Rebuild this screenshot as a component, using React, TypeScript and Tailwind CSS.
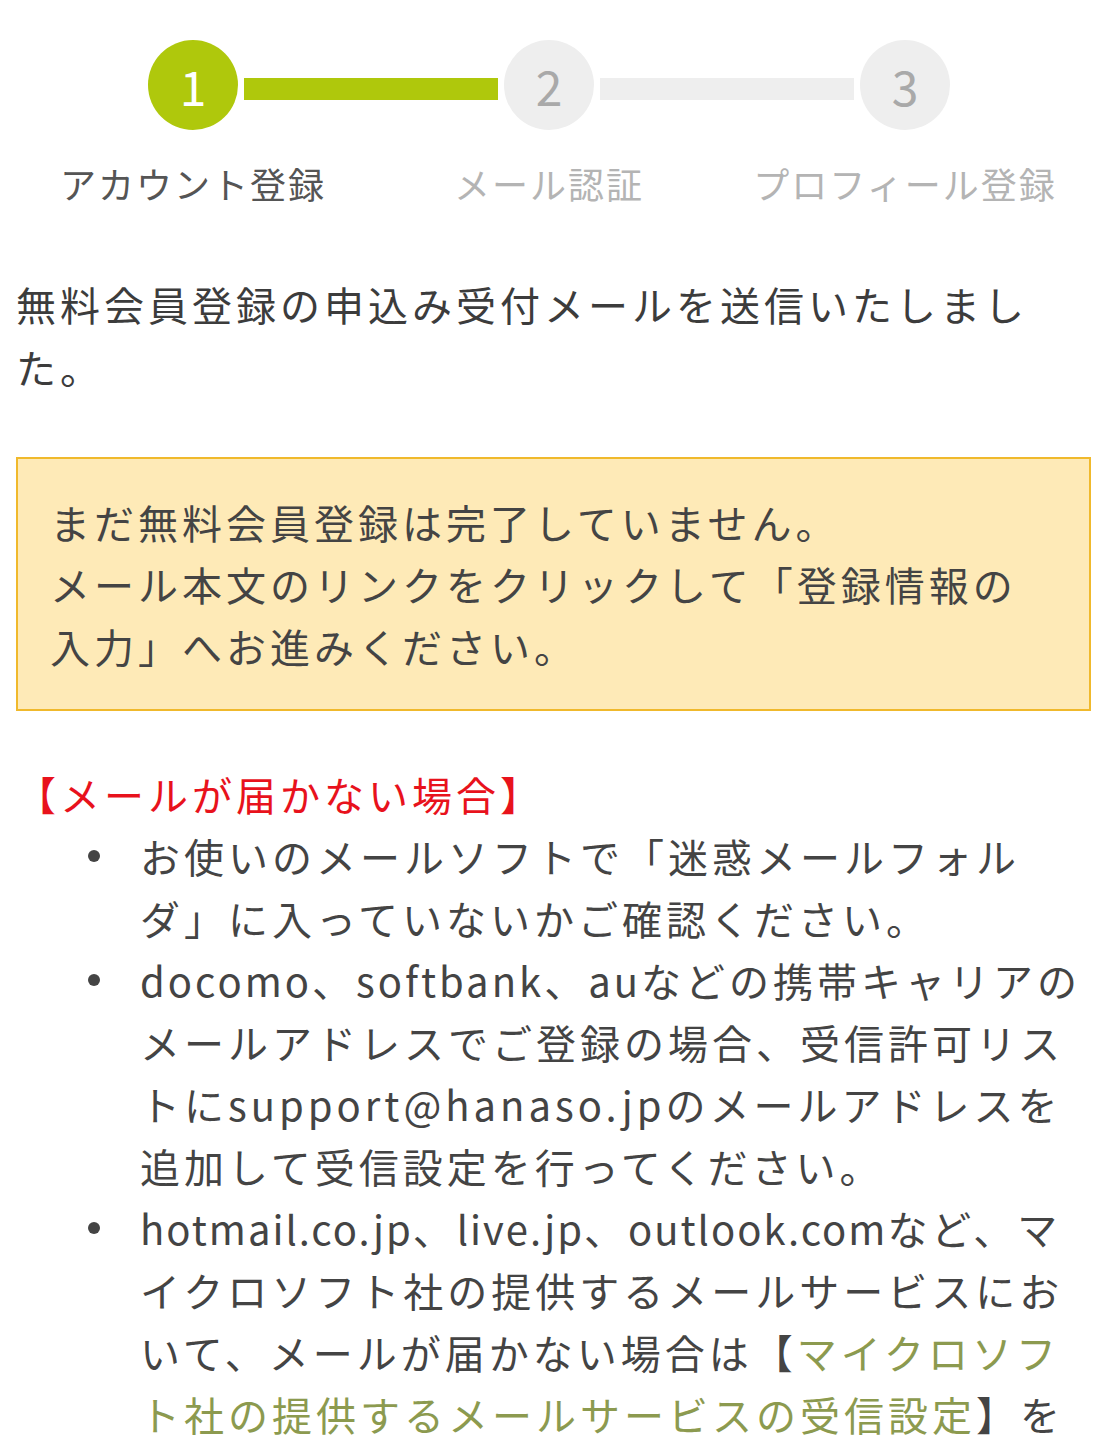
const font = { fontFamily: '"Noto Sans CJK JP", sans-serif' };

function StepCircle({ n, active }: { n: number; active?: boolean }) {
  return (
    <div
      className={
        "w-[90px] h-[90px] shrink-0 rounded-full flex items-center justify-center text-[48px] leading-none " +
        (active ? "bg-[#afc80c] text-white" : "bg-[#eeeeee] text-[#a9a9a9]")
      }
    >
      {n}
    </div>
  );
}

function Bar({ active }: { active?: boolean }) {
  return (
    <div
      className={
        "w-[254px] h-[22px] mx-[6px] mt-[8px] shrink-0 " +
        (active ? "bg-[#afc80c]" : "bg-[#eeeeee]")
      }
    />
  );
}

function Bullet({ children }: { children: React.ReactNode }) {
  return (
    <li className="flex">
      <div className="w-[124px] shrink-0 flex">
        <span className="ml-[72px] mt-[25px] w-[12px] h-[12px] rounded-full bg-[#444]" />
      </div>
      <div className="flex-1">{children}</div>
    </li>
  );
}

export default function App() {
  const steps = [
    { label: "アカウント登録", color: "text-[#555555]" },
    { label: "メール認証", color: "text-[#b4b4b4]" },
    { label: "プロフィール登録", color: "text-[#b4b4b4]" },
  ];

  return (
    <div
      className="w-[1107px] bg-white pl-[16px] pr-[16px] pt-[40px] text-[#3c3c3c] [text-spacing-trim:space-all]"
      style={font}
    >
      {/* steps */}
      <div className="w-[1068px] -ml-[1px]">
        <div className="flex items-center pl-[133px]">
          <StepCircle n={1} active />
          <Bar active />
          <StepCircle n={2} />
          <Bar />
          <StepCircle n={3} />
        </div>
        <div className="grid grid-cols-3 mt-[26px]">
          {steps.map((s) => (
            <div
              key={s.label}
              className={"text-center text-[36px] leading-[54px] tracking-[2px] " + s.color}
            >
              {s.label}
            </div>
          ))}
        </div>
      </div>

      <p className="mt-[63px] text-[40px] leading-[63px] tracking-[4px]">
        無料会員登録の申込み受付メールを送信いたしました。
      </p>

      <div className="mt-[58px] border-2 border-[#f0b92c] bg-[#feeab7] px-[32px] py-[32px] text-[40px] leading-[62px] tracking-[4px] text-[#444]">
        まだ無料会員登録は完了していません。
        <br />
        メール本文のリンクをクリックして「登録情報の入力」へお進みください。
      </div>

      <div className="mt-[52px] text-[40px] leading-[62px] tracking-[4px] text-[#444]">
        <div className="text-[#e8121c]">【メールが届かない場合】</div>
        <ul>
          <Bullet>お使いのメールソフトで「迷惑メールフォルダ」に入っていないかご確認ください。</Bullet>
          <Bullet>
            <span className="tracking-[3px]">docomo</span>、<span className="tracking-[3px]">softbank</span>、
            <span className="tracking-[3px]">au</span>
            などの携帯キャリアのメールアドレスでご登録の場合、受信許可リストにsupport@hanaso.jpのメールアドレスを追加して受信設定を行ってください。
          </Bullet>
          <Bullet>
            <span className="tracking-[2px]">hotmail.co.jp</span>、<span className="tracking-[2px]">live.jp</span>、
            <span className="tracking-[2px]">outlook.com</span>
            など、マイクロソフト社の提供するメールサービスにおいて、メールが届かない場合は【
            <a className="text-[#8c9a4f]">マイクロソフト社の提供するメールサービスの受信設定</a>
            】をご確認ください。
          </Bullet>
        </ul>
      </div>
    </div>
  );
}
